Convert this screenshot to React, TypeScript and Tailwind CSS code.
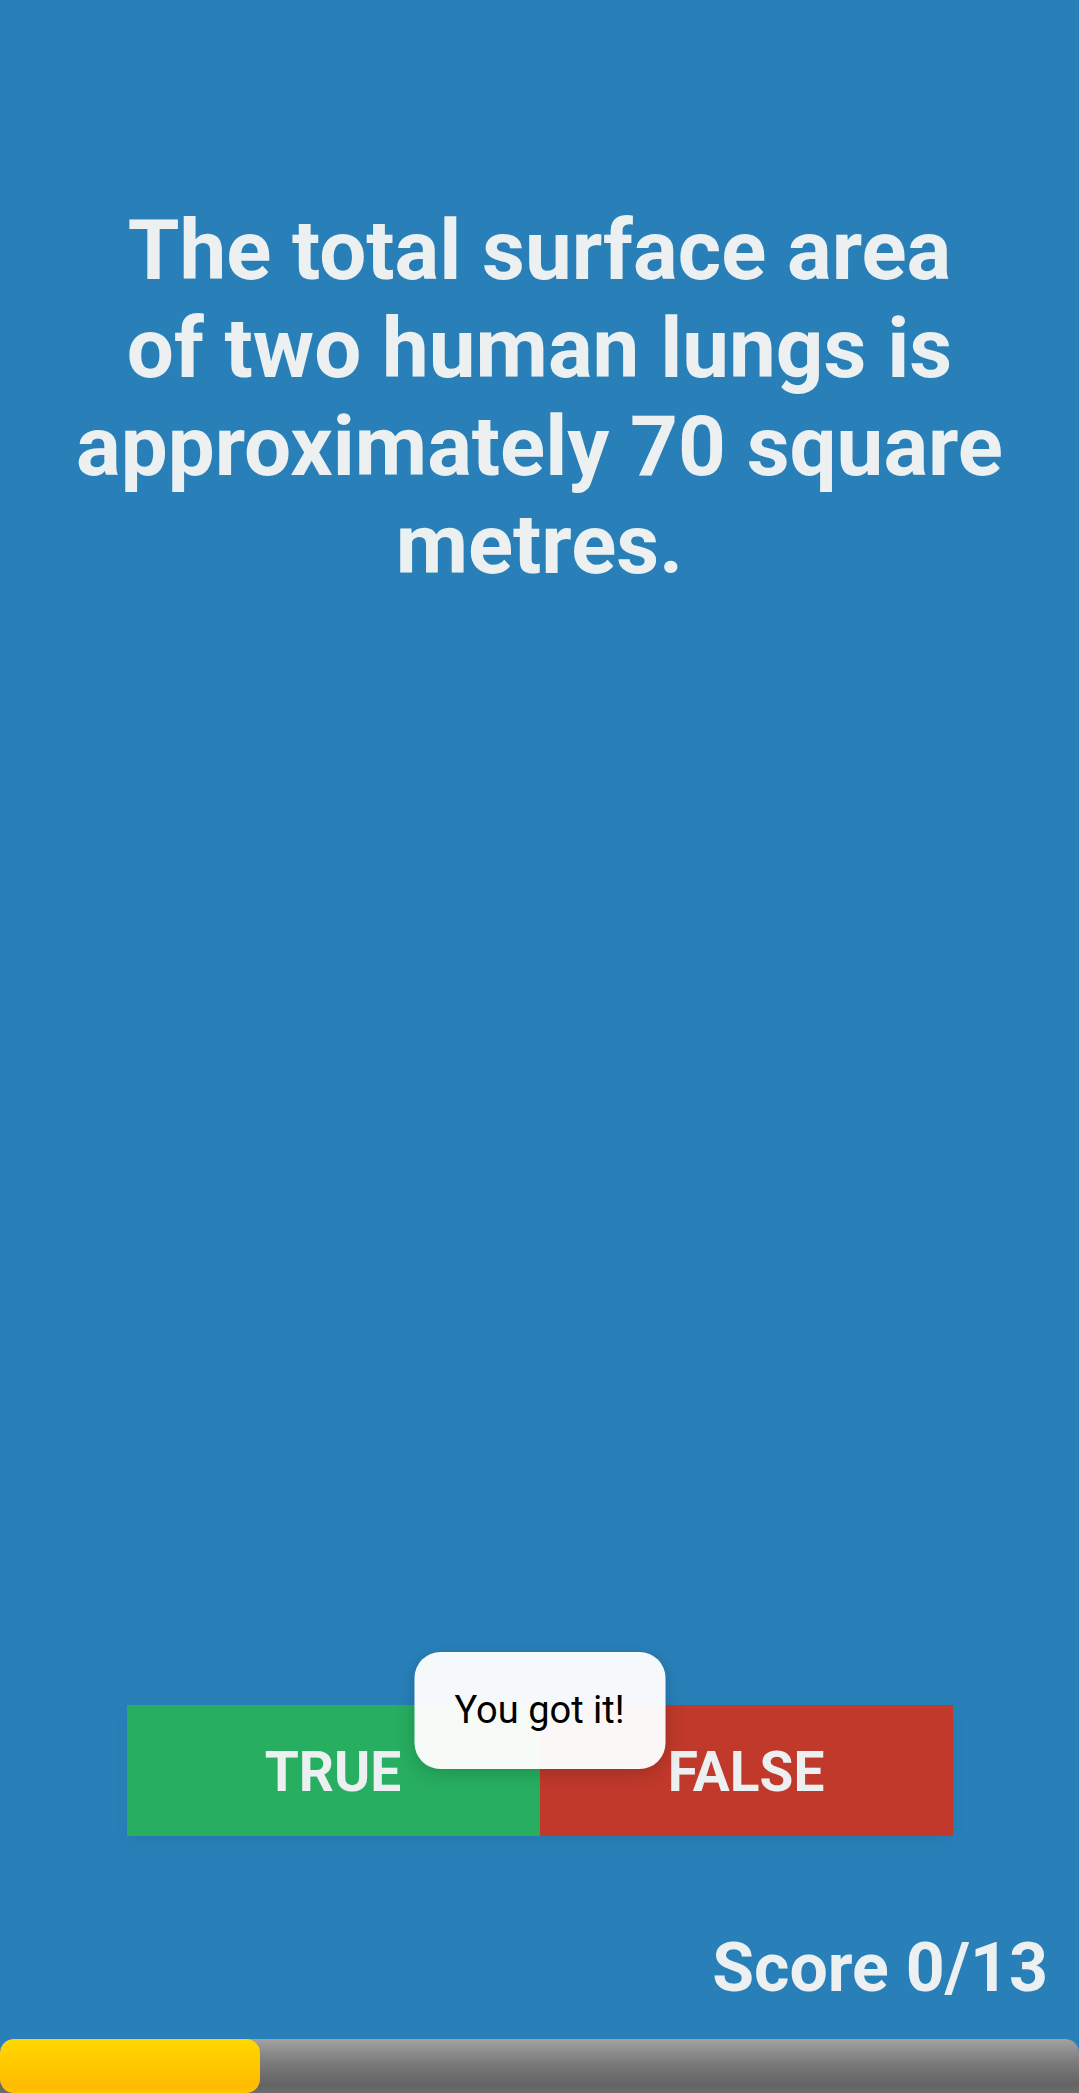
const App = () => {
  return (
    <div className="w-full h-[2093px] bg-[#2980b9] flex flex-col overflow-hidden" style={{ fontFamily: "Roboto, 'Liberation Sans', sans-serif" }}>
      <div className="pt-[202px] px-[42px] text-center text-[83.5px] font-bold leading-[98px] text-[#ecf0f1]">
        The total surface area
        <br />
        of two human lungs is
        <br />
        approximately 70 square
        <br />
        metres.
      </div>

      <div className="flex-1" />

      <div className="relative mx-auto w-[826px] h-[131px] flex shadow-[0_6px_14px_rgba(0,0,0,0.06)]">
        <button className="flex-1 bg-[#27ae60] text-[#ecf0f1] text-[55px] font-bold flex items-center justify-center pt-[4px]">
          TRUE
        </button>
        <button className="flex-1 bg-[#c0392b] text-[#ecf0f1] text-[55px] font-bold flex items-center justify-center pt-[4px]">
          FALSE
        </button>
        <div className="absolute left-1/2 -translate-x-1/2 top-[-53px] w-[251px] h-[117px] rounded-[26px] bg-[#fdfdfd]/[0.97] shadow-[0_4px_18px_rgba(0,0,0,0.18)] flex items-center justify-center text-[38px] text-black">
          You got it!
        </div>
      </div>

      <div className="mt-[92px] pr-[31px] text-right text-[68px] font-bold leading-[80px] text-[#ecf0f1]">
        Score 0/13
      </div>

      <div className="mt-[31px] h-[54px] w-full rounded-t-[14px] overflow-hidden flex bg-[linear-gradient(to_bottom,#a2a2a2,#7a7a7a_45%,#636363_85%,#6e6e6e)]">
        <div className="w-[260px] h-full rounded-[14px] bg-[linear-gradient(to_bottom,#ffd800,#ffc800_50%,#ffbb00_85%,#ffc400)]" />
      </div>
    </div>
  )
}

export default App
